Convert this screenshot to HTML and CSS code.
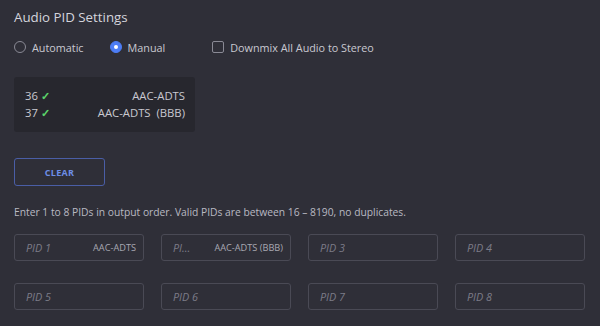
FILE: index.html
```html
<!DOCTYPE html>
<html lang="en">
<head>
  <meta charset="UTF-8" />
  <title>Audio PID Settings</title>
  <link rel="stylesheet" href="styles.css">
</head>
<body>

<div class="panel">
  <h2 class="title">Audio PID Settings</h2>

  <div class="options">
    <label class="opt"><span class="radio"></span>Automatic</label>
    <label class="opt"><span class="radio on"></span>Manual</label>
    <label class="opt check"><span class="box"></span>Downmix All Audio to Stereo</label>
  </div>

  <div class="found">
    <div class="found-row"><span>36 <i class="ok">✓</i></span><span>AAC-ADTS</span></div>
    <div class="found-row"><span>37 <i class="ok">✓</i></span><span>AAC-ADTS&nbsp; (BBB)</span></div>
  </div>

  <button class="clear">CLEAR</button>

  <p class="hint">Enter 1 to 8 PIDs in output order. Valid PIDs are between 16 – 8190, no duplicates.</p>

  <div class="pids">
    <div class="pid"><span class="ph">PID 1</span><span class="codec">AAC-ADTS</span></div>
    <div class="pid"><span class="ph">PI...</span><span class="codec">AAC-ADTS (BBB)</span></div>
    <div class="pid"><span class="ph">PID 3</span></div>
    <div class="pid"><span class="ph">PID 4</span></div>
    <div class="pid"><span class="ph">PID 5</span></div>
    <div class="pid"><span class="ph">PID 6</span></div>
    <div class="pid"><span class="ph">PID 7</span></div>
    <div class="pid"><span class="ph">PID 8</span></div>
  </div>
</div>

</body>
</html>
```

FILE: styles.css
```css
body {
  margin: 0;
  background: #2f2f38;
  font-family: "Open Sans", Arial, sans-serif;
  color: #c9c9d1;
}
.panel {
  padding: 6px 14px 0 14px;
}
.title {
  margin: 0;
  font-size: 13.3px;
  font-weight: 400;
  color: #d4d4dc;
  line-height: 22px;
}
.options {
  display: flex;
  align-items: center;
  margin-top: 9px;
  height: 20px;
  font-size: 10.8px;
}
.opt {
  display: flex;
  align-items: center;
  gap: 6px;
  margin-right: 26px;
}
.radio {
  width: 10px;
  height: 10px;
  border: 1px solid #8a8a95;
  border-radius: 50%;
  box-sizing: content-box;
}
.radio.on {
  background: #4d7df5;
  border-color: #4d7df5;
  position: relative;
}
.radio.on::after {
  content: "";
  position: absolute;
  left: 3px;
  top: 3px;
  width: 4px;
  height: 4px;
  border-radius: 50%;
  background: #fff;
}
.check {
  margin-left: 21px;
}
.box {
  width: 10px;
  height: 10px;
  border: 1px solid #8a8a95;
  border-radius: 2px;
}
.found {
  width: 160px;
  margin-top: 20px;
  padding: 10px 10px 11px 11px;
  background: #27272e;
  border-radius: 3px;
  font-size: 11.3px;
  line-height: 17px;
}
.found-row {
  display: flex;
  justify-content: space-between;
}
.ok {
  font-style: normal;
  color: #5bd46a;
  font-weight: 700;
}
.clear {
  display: block;
  margin-top: 26px;
  width: 91px;
  height: 28px;
  background: transparent;
  border: 1px solid #4a5ea6;
  border-radius: 3px;
  color: #6d8ee6;
  font-family: inherit;
  font-size: 9px;
  font-weight: 700;
  letter-spacing: 0.3px;
}
.hint {
  margin: 19px 0 0 0;
  font-size: 10.3px;
  line-height: 14px;
  color: #b9b9c2;
}
.pids {
  display: grid;
  grid-template-columns: repeat(4, 130px);
  column-gap: 17px;
  row-gap: 22px;
  margin-top: 15px;
}
.pid {
  height: 27px;
  box-sizing: border-box;
  border: 1px solid #4a4a55;
  border-radius: 3px;
  display: flex;
  align-items: center;
  justify-content: space-between;
  padding: 0 7px 0 11px;
}
.ph {
  font-style: italic;
  font-size: 10.8px;
  color: #7c7c88;
}
.codec {
  font-size: 9.2px;
  font-weight: 500;
  color: #a8a8b2;
}
```
